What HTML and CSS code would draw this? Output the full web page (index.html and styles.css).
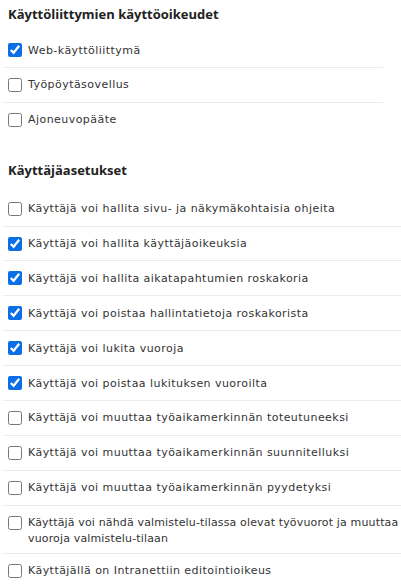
FILE: index.html
```html
<!DOCTYPE html>
<html>
  <head>
    <title>Käyttöoikeudet</title>
    <link rel="stylesheet" href="styles.css">
  </head>
  <body>
    <h3 class="section-title">Käyttöliittymien käyttöoikeudet</h3>
    <div class="option-list narrow">
      <label class="option"><input type="checkbox" checked /><span>Web-käyttöliittymä</span></label>
      <label class="option"><input type="checkbox" /><span>Työpöytäsovellus</span></label>
      <label class="option"><input type="checkbox" /><span>Ajoneuvopääte</span></label>
    </div>

    <h3 class="section-title second">Käyttäjäasetukset</h3>
    <div class="option-list">
      <label class="option"><input type="checkbox" /><span>Käyttäjä voi hallita sivu- ja näkymäkohtaisia ohjeita</span></label>
      <label class="option"><input type="checkbox" checked /><span>Käyttäjä voi hallita käyttäjäoikeuksia</span></label>
      <label class="option"><input type="checkbox" checked /><span>Käyttäjä voi hallita aikatapahtumien roskakoria</span></label>
      <label class="option"><input type="checkbox" checked /><span>Käyttäjä voi poistaa hallintatietoja roskakorista</span></label>
      <label class="option"><input type="checkbox" checked /><span>Käyttäjä voi lukita vuoroja</span></label>
      <label class="option"><input type="checkbox" checked /><span>Käyttäjä voi poistaa lukituksen vuoroilta</span></label>
      <label class="option"><input type="checkbox" /><span>Käyttäjä voi muuttaa työaikamerkinnän toteutuneeksi</span></label>
      <label class="option"><input type="checkbox" /><span>Käyttäjä voi muuttaa työaikamerkinnän suunnitelluksi</span></label>
      <label class="option"><input type="checkbox" /><span>Käyttäjä voi muuttaa työaikamerkinnän pyydetyksi</span></label>
      <label class="option long"><input type="checkbox" /><span>Käyttäjä voi nähdä valmistelu-tilassa olevat työvuorot ja muuttaa vuoroja valmistelu-tilaan</span></label>
      <label class="option"><input type="checkbox" /><span>Käyttäjällä on Intranettiin editointioikeus</span></label>
    </div>
  </body>
</html>
```

FILE: styles.css
```css
body {
  margin: 0;
  font-family: "DejaVu Sans", Verdana, sans-serif;
  font-size: 11px;
  letter-spacing: 0.45px;
  color: #333;
  background: #fff;
}
.section-title {
  margin: 0;
  padding: 5px 0 0 8px;
  height: 33px;
  font-family: "Open Sans", Arial, sans-serif;
  font-size: 13px;
  font-weight: bold;
  letter-spacing: 0;
  color: #222;
  box-sizing: border-box;
}
.section-title.second {
  margin-top: 22px;
  padding-top: 2px;
  height: 33px;
}
.option-list {
  margin-left: 3px;
}
.option-list.narrow {
  width: 380px;
}
.option {
  display: flex;
  align-items: flex-start;
  gap: 6px;
  padding: 7px 0 6.875px 5px;
  border-bottom: 1px solid #ebebeb;
  line-height: 15.5px;
}
.option-list.narrow .option:last-child {
  border-bottom: none;
}
.option input {
  width: 14px;
  height: 14px;
  margin: 3px 0;
  flex-shrink: 0;
  accent-color: #0b6ee6;
}
.option span {
  padding-top: 2.5px;
}
.option.long span {
  letter-spacing: 0.15px;
}
```
